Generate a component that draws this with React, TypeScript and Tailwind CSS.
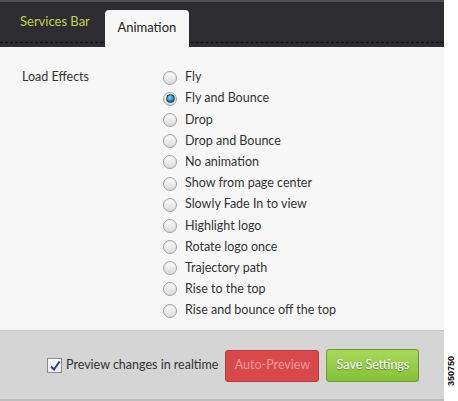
import React from 'react';

const effects = [
  'Fly',
  'Fly and Bounce',
  'Drop',
  'Drop and Bounce',
  'No animation',
  'Show from page center',
  'Slowly Fade In to view',
  'Highlight logo',
  'Rotate logo once',
  'Trajectory path',
  'Rise to the top',
  'Rise and bounce off the top',
];

function Radio({ checked }: { checked?: boolean }) {
  return (
    <span className="relative flex h-[14px] w-[14px] shrink-0 items-center justify-center rounded-full border border-[#a3a3a3] bg-gradient-to-b from-[#ffffff] to-[#d9d9d9] shadow-[inset_0_1px_1px_rgba(0,0,0,0.08)]">
      {checked && (
        <span className="h-[9px] w-[9px] rounded-full border-[1.5px] border-[#17344c] bg-[radial-gradient(circle_at_40%_35%,#8ad6f7,#1f7fb8_60%,#0f4f7a)]" />
      )}
    </span>
  );
}

export default function App() {
  return (
    <div className="flex h-[401px] w-[458px] bg-white font-['Lato',sans-serif] text-[#333]">
      <div className="flex w-[444px] shrink-0 flex-col">
        {/* header with tabs */}
        <div className="relative h-[47px] shrink-0 border-t-2 border-[#4d4d52] bg-[#2d2c31]">
          <div className="absolute bottom-[4px] left-0 right-0 border-b border-dashed border-[#0c0c0e]" />
          <div className="relative flex h-full items-end pl-[20px]">
            <span className="mb-[16px] text-[13px] text-[#c3d255]">Services Bar</span>
            <div className="ml-[15px] flex h-[37px] w-[84px] items-center justify-center rounded-t-[4px] bg-[#f7f7f7] pb-[2px] text-[13px] text-[#222]">
              Animation
            </div>
          </div>
        </div>

        {/* body */}
        <div className="flex flex-1 bg-[#f7f7f7] pl-[22px] pt-[20px]">
          <div className="w-[141px] pt-[1px] text-[12.5px]">Load Effects</div>
          <div className="flex flex-col">
            {effects.map((e, i) => (
              <label key={e} className="flex h-[21.2px] items-center gap-[8px] text-[12.5px]">
                <Radio checked={i === 1} />
                <span>{e}</span>
              </label>
            ))}
          </div>
        </div>

        {/* footer */}
        <div className="flex h-[71px] shrink-0 items-center whitespace-nowrap border-t border-b-2 border-t-[#c4c4c4] border-b-[#bdbdbd] bg-[#d5d5d5] pl-[47px] pt-[1px]">
          <span className="flex h-[15px] w-[15px] shrink-0 items-center justify-center border border-[#8a8a8a] bg-gradient-to-b from-white to-[#e8e8e8]">
            <svg viewBox="0 0 12 12" className="h-[12px] w-[12px]">
              <path d="M2 6.5 L5 9.5 L10.5 1.5" fill="none" stroke="#2b3f8f" strokeWidth="2" />
            </svg>
          </span>
          <span className="ml-[4px] shrink-0 text-[12.5px] text-[#333]">Preview changes in realtime</span>
          <button className="ml-[7px] h-[32px] w-[94px] shrink-0 rounded-[3px] border border-[#b53c3c] bg-[#d8494b] text-[12.5px] text-[#f09a9a]">
            Auto-Preview
          </button>
          <button className="ml-[7px] h-[33px] w-[93px] shrink-0 rounded-[3px] border border-[#6f9a2a] bg-gradient-to-b from-[#a9d85a] to-[#86c13a] text-[12.5px] text-white [text-shadow:0_1px_1px_rgba(0,0,0,0.35)]">
            Save Settings
          </button>
        </div>
      </div>

      <div className="relative w-[14px] shrink-0">
        <span className="absolute left-[7px] top-[371px] -translate-x-1/2 -translate-y-1/2 -rotate-90 whitespace-nowrap font-['Liberation_Sans',sans-serif] text-[9px] font-bold leading-none text-black">
          350750
        </span>
      </div>
    </div>
  );
}
